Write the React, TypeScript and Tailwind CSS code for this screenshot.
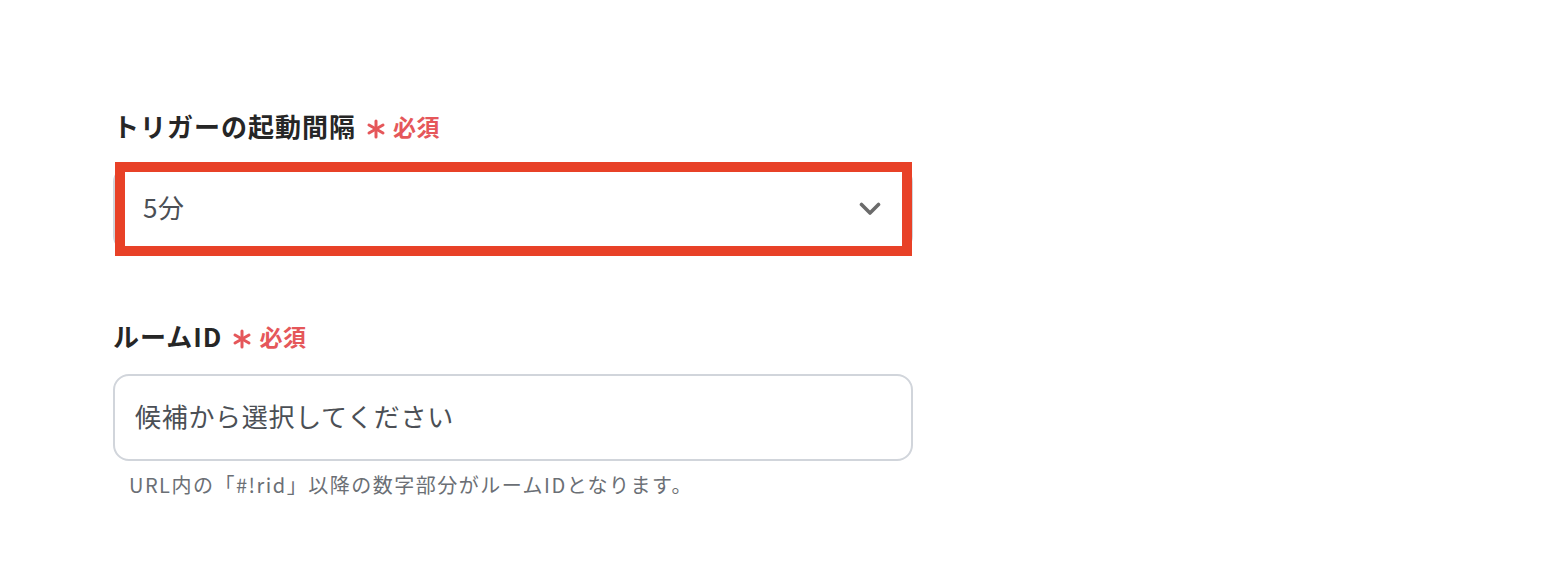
import React from "react";

function Required() {
  return (
    <span className="ml-[10px] flex items-center text-[#e5575a]">
      <svg width="20" height="20" viewBox="0 0 20 20" className="mt-[5px]">
        <g stroke="#e5575a" strokeWidth="3" strokeLinecap="round">
          <line x1="10" y1="2" x2="10" y2="18" />
          <line x1="3" y1="6" x2="17" y2="14" />
          <line x1="3" y1="14" x2="17" y2="6" />
        </g>
      </svg>
      <span className="ml-[7px] text-[23px] font-bold tracking-[0.5px]">必須</span>
    </span>
  );
}

export default function App() {
  return (
    <div
      className="min-h-[587px] w-[1568px] bg-white pl-[113px] pt-[108px]"
      style={{ fontFamily: '"Noto Sans CJK JP", "Noto Sans", sans-serif' }}
    >
      <div className="w-[800px]">
        <div className="flex h-[36px] items-center text-[26px] font-bold leading-[36px] tracking-[1px] text-[#262626]">
          <span>トリガーの起動間隔</span>
          <Required />
        </div>
        <div className="relative mt-[22px]">
          <div className="flex h-[86px] items-center justify-between rounded-[16px] border-2 border-[#d1d5db] pb-[5px] pl-[28px] pr-[30px] text-[26px] tracking-[0.5px] text-[#4b4f55]">
            <span>5分</span>
            <svg width="22" height="14" viewBox="0 0 22 14" className="mt-[4px]">
              <path d="M2.5 2.5 L11 11 L19.5 2.5" fill="none" stroke="#6b6b6b" strokeWidth="3.6" strokeLinecap="round" strokeLinejoin="round" />
            </svg>
          </div>
          <div className="pointer-events-none absolute left-[2px] right-[1px] top-[-4px] bottom-[-4px] border-[10px] border-[#e84127]" />
        </div>

        <div className="mt-[66px] flex h-[36px] items-center text-[26px] font-bold leading-[36px] tracking-[1px] text-[#262626]">
          <span>ルームID</span>
          <Required />
        </div>
        <div className="mt-[20px] flex h-[87px] items-center rounded-[16px] border-2 border-[#d1d5db] pb-[5px] pl-[20px] text-[26px] tracking-[0.7px] text-[#4b4f55]">
          候補から選択してください
        </div>
        <div className="ml-[16px] mt-[10px] text-[20px] leading-[28px] tracking-[1.5px] text-[#6b6f75]">
          URL内の「#!rid」以降の数字部分がルームIDとなります。
        </div>
      </div>
    </div>
  );
}
